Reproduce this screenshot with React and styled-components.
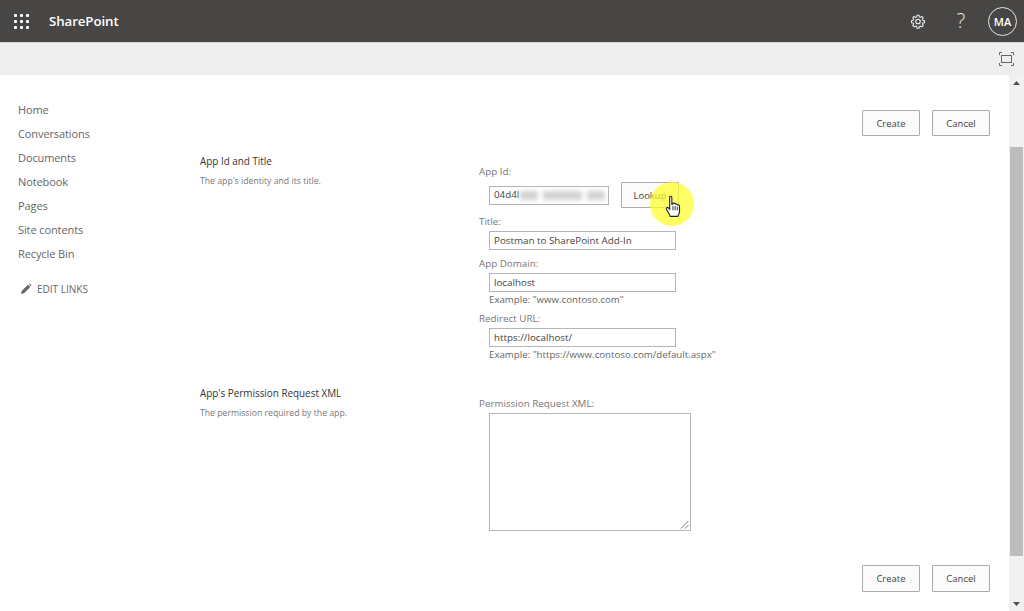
import React from 'react';
import styled, { createGlobalStyle } from 'styled-components';

const Global = createGlobalStyle`
  html, body { margin: 0; padding: 0; height: 100%; overflow: hidden; background: #fff; }
  body { font-family: "Open Sans", "Noto Sans", "Liberation Sans", sans-serif; color: #444; }
  #root { height: 100%; }
`;

const Page = styled.div`
  width: 1024px; height: 611px; display: flex; flex-direction: column; overflow: hidden; position: relative;
`;
const SuiteBar = styled.header`
  height: 42px; flex: none; box-sizing: content-box; background: #484644; border-bottom: 1px solid #d4d4d4;
  display: flex; align-items: center; color: #fff;
`;
const Waffle = styled.div`
  width: 14px; margin-left: 14px; display: grid; grid-template-columns: repeat(3, 3px); gap: 3px; margin-right: 21px;
  span { width: 3px; height: 3px; background: #fff; border-radius: 1px; }
`;
const Brand = styled.div`font-size: 13.3px; font-weight: 600; letter-spacing: -0.1px; color: #fff;`;
const Spacer = styled.div`flex: 1;`;
const GearSlot = styled.div`display: flex; align-items: center; justify-content: center; width: 16px; margin-right: 4px;`;
const Help = styled.div`
  width: 16px; margin-left: 23px; text-align: center; font-size: 20px; font-weight: 300; color: #e8e8e8; line-height: 1;
`;
const Avatar = styled.div`
  width: 27px; height: 27px; border: 1px solid #e6e6e6; border-radius: 50%; margin: 0 7px 0 19px;
  display: flex; align-items: center; justify-content: center; font-size: 11px; font-weight: 600; color: #fff;
`;
const RibbonBar = styled.div`
  height: 32px; flex: none; background: #eeeeee; display: flex; align-items: center; justify-content: flex-end; padding-right: 10px;
`;
const Body = styled.div`flex: 1; display: flex; min-height: 0;`;
const Nav = styled.nav`
  width: 200px; flex: none; padding: 23px 0 0 18px; box-sizing: border-box; display: flex; flex-direction: column;
`;
const NavItem = styled.a`font-size: 11px; letter-spacing: -0.1px; line-height: 24px; height: 24px; color: #666;`;
const EditLinks = styled.a`
  display: flex; align-items: center; gap: 5px; margin-top: 11px; margin-left: 2px; font-size: 10px; height: 24px; color: #666;
`;
const Main = styled.main`flex: 1; display: flex; flex-direction: column; padding-top: 35px; min-width: 0;`;
const ButtonRow = styled.div`display: flex; justify-content: flex-end; gap: 12px; padding-right: 19px; margin-top: ${p => p.$top || 0}px;`;
const Btn = styled.button`
  width: 58px; height: ${p => p.$h || 26}px; box-sizing: border-box; padding: 0;
  border: 1px solid #ababab; border-radius: 1px; background: #fbfbfb; color: #444;
  font: 400 9.5px "Open Sans", sans-serif;
`;
const Section = styled.section`display: grid; grid-template-columns: 279px 1fr; margin-top: ${p => p.$top}px;`;
const Intro = styled.div`display: flex; flex-direction: column;`;
const SectionTitle = styled.h3`margin: 0; font-size: 9.9px; font-weight: 400; line-height: 14px; color: #333;`;
const SectionDesc = styled.p`margin: 7px 0 0; font-size: 8.7px; line-height: 12px; color: #777;`;
const Fields = styled.div`display: flex; flex-direction: column; padding-top: 11px;`;
const Label = styled.label`font-size: 9.8px; line-height: 14px; color: #777; margin-top: ${p => p.$top || 0}px;`;
const Indent = styled.div`padding-left: 10px; display: flex; align-items: center; gap: 12px; margin-top: ${p => p.$top || 0}px;`;
const Input = styled.div`
  width: ${p => p.$w || 187}px; height: 19px; box-sizing: border-box; border: 1px solid #b4b4b4; background: #fff;
  font-size: 9.8px; line-height: 18px; padding-left: 4px; color: #444; white-space: nowrap; overflow: hidden;
  display: flex; align-items: center; position: relative;
`;
const Blurred = styled.i`
  display: block; position: absolute; height: 9px; top: 4px; left: ${p => p.$left}px; width: ${p => p.$w}px;
  background: #c4c4c4; filter: blur(2.2px); opacity: .75;
`;
const Hint = styled.div`font-size: 9.7px; line-height: 13px; color: #666; padding-left: 10px; margin-top: 1px;`;
const TextBox = styled.div`
  margin-left: 10px; margin-top: 2px; width: 202px; height: 118px; box-sizing: border-box; border: 1px solid #b4b4b4; background: #fff; position: relative;
`;
const Grip = styled.svg`position: absolute; right: 1px; bottom: 1px;`;
const Scrollbar = styled.div`
  width: 15px; flex: none; background: #f1f1f1; display: flex; flex-direction: column; align-items: center;
`;
const Arrow = styled.div`
  height: 15px; width: 100%; display: flex; align-items: center; justify-content: center; flex: none;
`;
const Thumb = styled.div`width: 13px; margin-top: 57px; height: 409px; background: #bcbcbc; flex: none;`;
const Highlight = styled.div`
  position: absolute; left: 650px; top: 182px; width: 44px; height: 44px; border-radius: 50%; background: rgba(255, 253, 40, .72);
`;
const Cursor = styled.svg`position: absolute; left: 665px; top: 195px;`;

const Gear = () => (
  <svg width="17" height="17" viewBox="0 0 24 24" fill="none" stroke="#eee" strokeWidth="1.7">
    <path d="M10.3 2.5h3.4l.5 2.8 1.9.8 2.3-1.6 2.4 2.4-1.6 2.3.8 1.9 2.8.5v3.4l-2.8.5-.8 1.9 1.6 2.3-2.4 2.4-2.3-1.6-1.9.8-.5 2.8h-3.4l-.5-2.8-1.9-.8-2.3 1.6-2.4-2.4 1.6-2.3-.8-1.9-2.8-.5v-3.4l2.8-.5.8-1.9-1.6-2.3 2.4-2.4 2.3 1.6 1.9-.8z" transform="translate(12 12) scale(.9) translate(-12 -13)" />
    <circle cx="12" cy="12" r="3.4" />
  </svg>
);

const navItems = ['Home', 'Conversations', 'Documents', 'Notebook', 'Pages', 'Site contents', 'Recycle Bin'];

export default function App() {
  return (
    <Page>
      <Global />
      <SuiteBar>
        <Waffle>{Array.from({ length: 9 }).map((_, i) => <span key={i} />)}</Waffle>
        <Brand>SharePoint</Brand>
        <Spacer />
        <GearSlot><Gear /></GearSlot>
        <Help>?</Help>
        <Avatar>MA</Avatar>
      </SuiteBar>
      <RibbonBar>
        <svg width="15" height="14" viewBox="0 0 15 14" fill="none" stroke="#666" strokeWidth="1">
          <rect x="2.5" y="3.5" width="10" height="7" />
          <path d="M.5 3V.5H3M12 .5h2.500V3M14.500 11v2.500H12M3 13.500H.5V11" />
        </svg>
      </RibbonBar>
      <Body>
        <Nav>
          {navItems.map(n => <NavItem key={n}>{n}</NavItem>)}
          <EditLinks>
            <svg width="12" height="12" viewBox="0 0 12 12"><path d="M1 11l.7-3L8 1.700 10.300 4 4 10.300z M8.800 1l.8-.6 2 2-.7.800z" fill="#666" /></svg>
            EDIT LINKS
          </EditLinks>
        </Nav>
        <Main>
          <ButtonRow><Btn>Create</Btn><Btn>Cancel</Btn></ButtonRow>
          <Section $top={18}>
            <Intro>
              <SectionTitle>App Id and Title</SectionTitle>
              <SectionDesc>The app's identity and its title.</SectionDesc>
            </Intro>
            <Fields>
              <Label>App Id:</Label>
              <Indent $top={3}>
                <Input $w={120}>04d4l
                  <Blurred $left={30} $w={18} />
                  <Blurred $left={53} $w={39} />
                  <Blurred $left={97} $w={18} />
                </Input>
                <Btn>Lookup</Btn>
              </Indent>
              <Label $top={7}>Title:</Label>
              <Indent $top={2}><Input>Postman to SharePoint Add-In</Input></Indent>
              <Label $top={7}>App Domain:</Label>
              <Indent $top={2}><Input>localhost</Input></Indent>
              <Hint>Example: "www.contoso.com"</Hint>
              <Label $top={6}>Redirect URL:</Label>
              <Indent $top={2}><Input>https://localhost/</Input></Indent>
              <Hint>Example: "https://www.contoso.com/default.aspx"</Hint>
            </Fields>
          </Section>
          <Section $top={25}>
            <Intro>
              <SectionTitle>App's Permission Request XML</SectionTitle>
              <SectionDesc>The permission required by the app.</SectionDesc>
            </Intro>
            <Fields>
              <Label>Permission Request XML:</Label>
              <TextBox>
                <Grip width="10" height="10" viewBox="0 0 10 10" stroke="#777" strokeWidth="1">
                  <path d="M2 9.500L9.500 2M6 9.500L9.500 6" />
                </Grip>
              </TextBox>
            </Fields>
          </Section>
          <ButtonRow $top={34}><Btn $h={27}>Create</Btn><Btn $h={27}>Cancel</Btn></ButtonRow>
        </Main>
        <Scrollbar>
          <Arrow><svg width="7" height="4"><path d="M0 4L3.500 0 7 4z" fill="#505050" /></svg></Arrow>
          <Thumb />
          <Spacer />
          <Arrow><svg width="7" height="4"><path d="M0 0L3.500 4 7 0z" fill="#505050" /></svg></Arrow>
        </Scrollbar>
      </Body>
      <Highlight />
      <Cursor width="17" height="23" viewBox="0 0 15 21">
        <path d="M4 1.500c1-.8 2 0 2 1v6l1-.2V7.500c1-.6 1.800 0 2 .7 1-.5 1.800 0 2 .8 1-.3 2 .3 2 1.300V15c0 2-1 3-1.500 4.500h-7C4 17.500 2 15 1 13c-.5-1 .5-2 1.500-1.500L4 13z" fill="#fff" stroke="#222" strokeWidth="1" />
        <path d="M7 10v4M9 10v4M11 10.500v3.500" stroke="#222" strokeWidth=".8" />
      </Cursor>
    </Page>
  );
}
